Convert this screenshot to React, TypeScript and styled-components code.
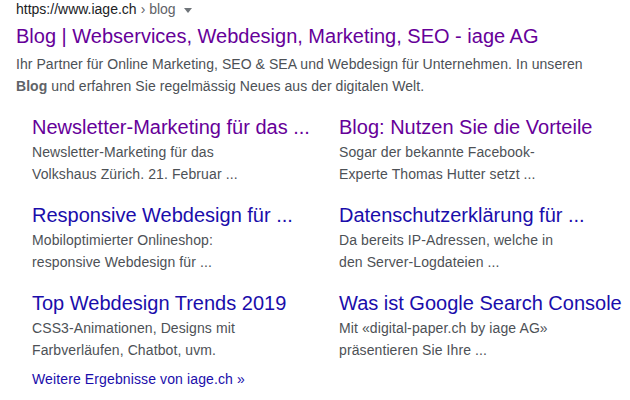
import React from "react";
import styled, { createGlobalStyle } from "styled-components";

const GlobalStyle = createGlobalStyle`
  html, body {
    margin: 0;
    padding: 0;
    background: #ffffff;
  }
  body {
    font-family: Arial, "Liberation Sans", sans-serif;
  }
`;

const Result = styled.div`
  padding: 0 16px;
  width: 598px;
`;

const UrlLine = styled.div`
  display: flex;
  align-items: center;
  font-size: 14px;
  line-height: 19px;
  height: 19px;
  color: #202124;
`;

const Crumb = styled.span`
  color: #5f6368;
  margin-left: 4px;
`;

const Caret = styled.span`
  display: inline-block;
  width: 0;
  height: 0;
  margin-left: 8px;
  margin-top: 1px;
  border-style: solid;
  border-width: 5px 4px 0 4px;
  border-color: #70757a transparent transparent transparent;
`;

const MainTitle = styled.a`
  display: block;
  margin-top: 4px;
  font-size: 20px;
  line-height: 26px;
  color: #660099;
  text-decoration: none;
`;

const Desc = styled.div`
  margin-top: 4px;
  font-size: 14px;
  line-height: 22px;
  letter-spacing: 0.06px;
  color: #4d5156;
  b {
    font-weight: bold;
    color: #5f6368;
  }
`;

const Sitelinks = styled.div`
  display: grid;
  grid-template-columns: 307px 280px;
  row-gap: 16px;
  margin-top: 16px;
  padding-left: 16px;
`;

const Sitelink = styled.div`
  display: flex;
  flex-direction: column;
`;

const LinkTitle = styled.a<{ $visited?: boolean }>`
  font-size: 20px;
  line-height: 28px;
  color: ${(p) => (p.$visited ? "#660099" : "#1a0dab")};
  text-decoration: none;
  white-space: nowrap;
`;

const LinkDesc = styled.div`
  font-size: 14px;
  line-height: 22px;
  letter-spacing: 0.1px;
  color: #4d5156;
`;

const More = styled.a`
  display: block;
  margin-top: 7px;
  padding-left: 16px;
  font-size: 14px;
  line-height: 22px;
  letter-spacing: 0.12px;
  color: #1a0dab;
  text-decoration: none;
`;

const links = [
  {
    title: "Newsletter-Marketing für das ...",
    visited: true,
    lines: ["Newsletter-Marketing für das", "Volkshaus Zürich. 21. Februar ..."],
  },
  {
    title: "Blog: Nutzen Sie die Vorteile",
    visited: true,
    lines: ["Sogar der bekannte Facebook-", "Experte Thomas Hutter setzt ..."],
  },
  {
    title: "Responsive Webdesign für ...",
    visited: false,
    lines: ["Mobiloptimierter Onlineshop:", "responsive Webdesign für ..."],
  },
  {
    title: "Datenschutzerklärung für ...",
    visited: false,
    lines: ["Da bereits IP-Adressen, welche in", "den Server-Logdateien ..."],
  },
  {
    title: "Top Webdesign Trends 2019",
    visited: false,
    lines: ["CSS3-Animationen, Designs mit", "Farbverläufen, Chatbot, uvm."],
  },
  {
    title: "Was ist Google Search Console",
    visited: false,
    lines: ["Mit «digital-paper.ch by iage AG»", "präsentieren Sie Ihre ..."],
  },
];

export default function App() {
  return (
    <>
      <GlobalStyle />
      <Result>
        <UrlLine>
          <span>https://www.iage.ch</span>
          <Crumb>› blog</Crumb>
          <Caret />
        </UrlLine>
        <MainTitle href="#">
          Blog | Webservices, Webdesign, Marketing, SEO - iage AG
        </MainTitle>
        <Desc>
          Ihr Partner für Online Marketing, SEO &amp; SEA und Webdesign für Unternehmen. In unseren
          <br />
          <b>Blog</b> und erfahren Sie regelmässig Neues aus der digitalen Welt.
        </Desc>
        <Sitelinks>
          {links.map((l) => (
            <Sitelink key={l.title}>
              <LinkTitle href="#" $visited={l.visited}>
                {l.title}
              </LinkTitle>
              <LinkDesc>
                {l.lines[0]}
                <br />
                {l.lines[1]}
              </LinkDesc>
            </Sitelink>
          ))}
        </Sitelinks>
        <More href="#">Weitere Ergebnisse von iage.ch »</More>
      </Result>
    </>
  );
}
